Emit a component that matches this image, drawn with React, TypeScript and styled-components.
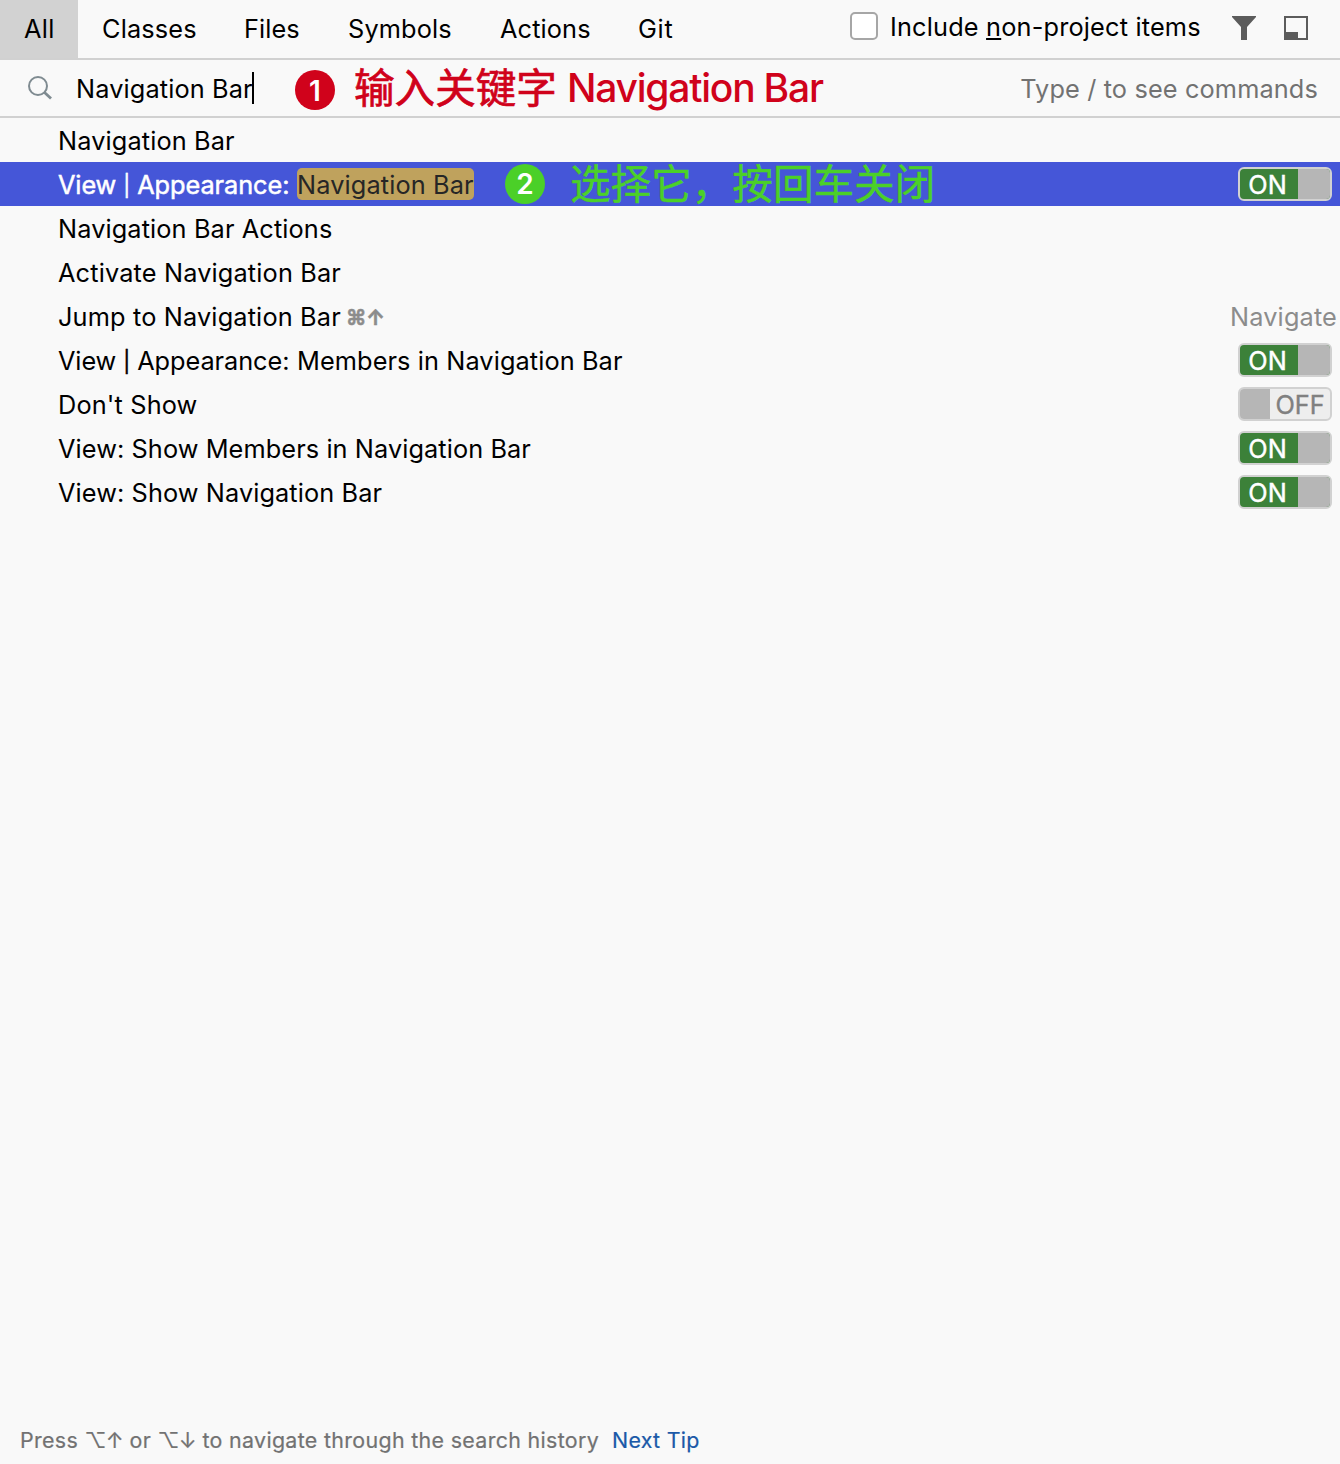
import React from "react";
import styled, { createGlobalStyle } from "styled-components";

const GlobalStyle = createGlobalStyle`
  body {
    margin: 0;
    background: #f9f9f9;
    font-family: Inter, "Noto Sans CJK SC", sans-serif;
    font-size: 25.3px;
    color: #000;
  }
  * { box-sizing: border-box; }
`;

const Window = styled.div`
  display: flex;
  flex-direction: column;
  width: 1340px;
  height: 1464px;
  background: #f9f9f9;
  overflow: hidden;
  white-space: nowrap;
`;

const Label = styled.span<{ $spacing?: number }>`
  letter-spacing: ${(p) => p.$spacing ?? 0.13}px;
`;

const Header = styled.header`
  display: flex;
  height: 60px;
  flex: none;
  border-bottom: 2px solid #d1d1d1;
`;

const Tab = styled.div<{ $width: number; $active?: boolean }>`
  display: flex;
  align-items: center;
  width: ${(p) => p.$width}px;
  padding: 0 0 2px 24px;
  background: ${(p) => (p.$active ? "#d2d2d2" : "transparent")};
`;

const Options = styled.div`
  display: flex;
  flex: 1;
  height: 54px;
  align-items: center;
  padding-left: 152px;
`;

const Checkbox = styled.div`
  width: 28px;
  height: 28px;
  margin: 0 12px 2px 0;
  border: 2px solid #a6a6a6;
  border-radius: 5px;
  background: #fff;
`;

const OptionText = styled.div`
  width: 342px;
  padding-bottom: 2px;
  u {
    text-decoration-thickness: 2px;
    text-underline-offset: 2px;
    text-decoration-skip-ink: none;
  }
`;

const IconBox = styled.svg`
  flex: none;
  width: 24px;
  height: 24px;
  margin: 2px 28px 0 0;
`;

const SearchRow = styled.div`
  display: flex;
  align-items: center;
  height: 58px;
  flex: none;
  padding: 0 22px 0 28px;
  border-bottom: 2px solid #d1d1d1;
`;

const SearchIcon = styled.svg`
  width: 24px;
  height: 24px;
  margin-right: 24px;
`;

const Query = styled.div`
  display: flex;
  align-items: center;
  width: 178px;
  height: 32px;
  border-right: 2px solid #000;
`;

const Step = styled.div<{ $color: string; $left: number; $top?: number }>`
  display: flex;
  align-items: center;
  justify-content: center;
  width: 40px;
  height: 40px;
  flex: none;
  margin: ${(p) => p.$top ?? 0}px 0 0 ${(p) => p.$left}px;
  padding-top: ${(p) => (p.$top ? 2 : 0)}px;
  border-radius: 50%;
  background: ${(p) => p.$color};
  color: #fff;
  font-size: 28px;
  font-weight: 600;
`;

const Note = styled.div<{ $color: string; $left: number; $stroke?: number }>`
  display: flex;
  align-items: baseline;
  margin-left: ${(p) => p.$left}px;
  padding-top: 2px;
  color: ${(p) => p.$color};
  font-size: 40.6px;
  line-height: 44px;
  -webkit-text-stroke: ${(p) => p.$stroke ?? 0}px ${(p) => p.$color};
`;

const NoteLatin = styled.span`
  margin-left: 10px;
  font-size: 39px;
  font-weight: 500;
  letter-spacing: -1.22px;
  transform: translateY(-1px);
  -webkit-text-stroke: 0;
`;

const Hint = styled.div`
  margin-left: auto;
  color: #727272;
`;

const List = styled.main`
  flex: 1;
`;

const Row = styled.div<{ $selected?: boolean }>`
  display: flex;
  align-items: center;
  height: 44px;
  padding: 0 8px 0 58px;
  background: ${(p) => (p.$selected ? "#4556d8" : "transparent")};
  color: ${(p) => (p.$selected ? "#fff" : "#000")};
  -webkit-text-stroke: ${(p) => (p.$selected ? "0.5px #fff" : "0")};
`;

const Match = styled.span`
  display: flex;
  align-items: center;
  width: 177px;
  height: 32px;
  border-radius: 5px;
  background: #bfa25d;
  color: #262626;
  -webkit-text-stroke: 0;
`;

const Prefix = styled.span`
  display: flex;
  align-items: center;
  width: 239px;
`;

const Pipe = styled.span`
  width: 21px;
  padding-top: 3px;
  font-size: 21px;
  text-align: center;
  -webkit-text-stroke-width: 0.5px;
`;

const Annotation = styled.div`
  display: flex;
  align-items: center;
  height: 44px;
  -webkit-text-stroke: 0;
`;

const Shortcut = styled.span`
  margin: 3px 0 0 5px;
  color: #8c8c8c;
  font-size: 21px;
  font-weight: 700;
  letter-spacing: -0.2px;
  -webkit-text-stroke: 0.5px #8c8c8c;
`;

const Group = styled.span`
  margin: 0 -5px 0 auto;
  color: #8c8c8c;
  letter-spacing: 0.15px;
`;

const Switch = styled.div<{ $on: boolean }>`
  display: flex;
  flex-direction: ${(p) => (p.$on ? "row" : "row-reverse")};
  width: 94px;
  height: 34px;
  margin-left: auto;
  border: 2px solid #d1d1d1;
  border-radius: 6px;
  background: ${(p) => (p.$on ? "#3c8139" : "#eeeeee")};
  color: ${(p) => (p.$on ? "#fff" : "#808080")};
  overflow: hidden;
  -webkit-text-stroke: ${(p) => (p.$on ? "0.4px #fff" : "0.4px #808080")};
`;

const SwitchText = styled.span<{ $on: boolean }>`
  display: flex;
  flex: 1;
  align-items: center;
  justify-content: center;
  padding-right: ${(p) => (p.$on ? 3 : 0)}px;
`;

const Knob = styled.span<{ $on: boolean }>`
  flex: none;
  width: ${(p) => (p.$on ? 32 : 30)}px;
  background: #b6b6b6;
`;

const Footer = styled.footer`
  display: flex;
  align-items: center;
  height: 48px;
  padding: 0 0 0 20px;
  color: #727272;
  font-size: 21.4px;
  -webkit-text-stroke: 0.2px currentColor;
`;

const Tip = styled.span`
  width: 592px;
`;

const Keys = styled.span`
  letter-spacing: -0.5px;
`;

const Link = styled.a`
  color: #1b59a8;
`;

const tabs = [
  { name: "All", width: 78, spacing: 0.3, active: true },
  { name: "Classes", width: 142, spacing: 0.15 },
  { name: "Files", width: 104, spacing: 0.1 },
  { name: "Symbols", width: 152, spacing: 0.15 },
  { name: "Actions", width: 138, spacing: 0.12 },
  { name: "Git", width: 84, spacing: 0.7 },
];

function Toggle({ on }: { on: boolean }) {
  return (
    <Switch $on={on}>
      <SwitchText $on={on}>{on ? "ON" : "OFF"}</SwitchText>
      <Knob $on={on} />
    </Switch>
  );
}

function AppearancePrefix() {
  return (
    <Prefix>
      <Label $spacing={-0.1}>View</Label>
      <Pipe>|</Pipe>
      <Label $spacing={-0.05}>Appearance:</Label>
    </Prefix>
  );
}

type Item = {
  text: string;
  spacing: number;
  appearance?: boolean;
  on?: boolean;
  shortcut?: string;
  group?: string;
};

const items: Item[] = [
  { text: "Navigation Bar Actions", spacing: 0.12 },
  { text: "Activate Navigation Bar", spacing: 0.16 },
  { text: "Jump to Navigation Bar", spacing: 0.16, shortcut: "⌘↑", group: "Navigate" },
  { text: "Members in Navigation Bar", spacing: 0.1, appearance: true, on: true },
  { text: "Don't Show", spacing: 0.15, on: false },
  { text: "View: Show Members in Navigation Bar", spacing: 0.09, on: true },
  { text: "View: Show Navigation Bar", spacing: 0.1, on: true },
];

export default function App() {
  return (
    <>
      <GlobalStyle />
      <Window>
        <Header>
          {tabs.map((t) => (
            <Tab key={t.name} $width={t.width} $active={t.active}>
              <Label $spacing={t.spacing}>{t.name}</Label>
            </Tab>
          ))}
          <Options>
            <Checkbox />
            <OptionText>
              <Label $spacing={0.18}>
                Include <u>n</u>on-project items
              </Label>
            </OptionText>
            <IconBox viewBox="0 0 24 24">
              <path d="M0 0H24V1L15 11V24H9V11L0 1Z" fill="#5c5c5c" />
            </IconBox>
            <IconBox viewBox="0 0 24 24">
              <path d="M0 0H24V24H0ZM2 2V16H14V22H22V2Z" fill="#5c5c5c" fillRule="evenodd" />
            </IconBox>
          </Options>
        </Header>
        <SearchRow>
          <SearchIcon viewBox="0 0 24 24" fill="none" stroke="#7f8b91">
            <circle cx="10" cy="10" r="9" strokeWidth="2" />
            <path d="M16 16L23 22.5" strokeWidth="2.8" />
          </SearchIcon>
          <Query>
            <Label>Navigation Bar</Label>
          </Query>
          <Step $color="#d0021b" $left={41} $top={4}>1</Step>
          <Note $color="#d0021b" $left={19} $stroke={0.7}>
            输入关键字<NoteLatin>Navigation Bar</NoteLatin>
          </Note>
          <Hint>
            <Label $spacing={0.14}>Type / to see commands</Label>
          </Hint>
        </SearchRow>
        <List>
          <Row>
            <Label>Navigation Bar</Label>
          </Row>
          <Row $selected>
            <AppearancePrefix />
            <Match>
              <Label>Navigation Bar</Label>
            </Match>
            <Annotation>
              <Step $color="#4bd028" $left={31}>2</Step>
              <Note $color="#4bd028" $left={25} $stroke={0.4}>选择它，按回车关闭</Note>
            </Annotation>
            <Toggle on />
          </Row>
          {items.map((it) => (
            <Row key={it.text}>
              {it.appearance && <AppearancePrefix />}
              <Label $spacing={it.spacing}>{it.text}</Label>
              {it.shortcut && <Shortcut>{it.shortcut}</Shortcut>}
              {it.group && <Group>{it.group}</Group>}
              {it.on !== undefined && <Toggle on={it.on} />}
            </Row>
          ))}
        </List>
        <Footer>
          <Tip>
            <Label $spacing={0.33}>
              Press <Keys>⌥↑</Keys> or <Keys>⌥↓</Keys> to navigate through the search history
            </Label>
          </Tip>
          <Link>
            <Label $spacing={0.3}>Next Tip</Label>
          </Link>
        </Footer>
      </Window>
    </>
  );
}
